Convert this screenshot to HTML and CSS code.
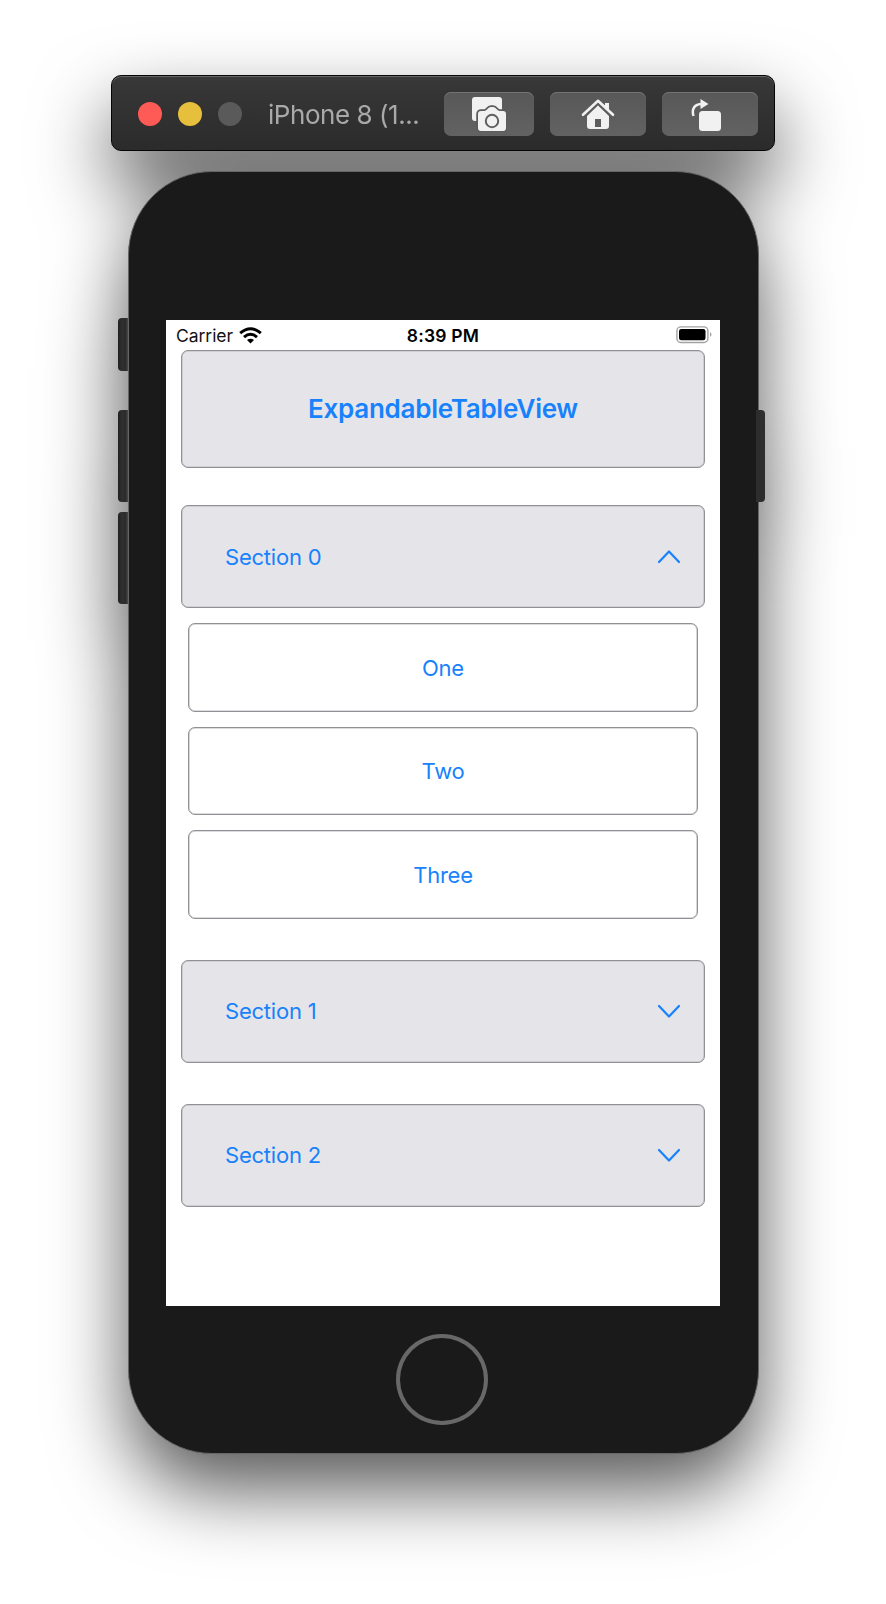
FILE: index.html
```html
<!DOCTYPE html>
<html lang="en">
<head>
<meta charset="utf-8">
<title>iPhone 8 Simulator</title>
<link rel="stylesheet" href="styles.css">
</head>
<body>
<main class="simulator">
  <header class="toolbar">
    <div class="lights"><span class="light close"></span><span class="light minimize"></span><span class="light disabled"></span></div>
    <div class="title">iPhone 8 (1...</div>
    <div class="actions">
      <button class="action shot" aria-label="Screenshot">
        <svg width="36" height="36" viewBox="0 0 36 36"><rect x="1" y="1" width="30" height="24" rx="3" fill="#f1f1f1"/><path fill="#f1f1f1" stroke="#5c5c5c" stroke-width="3.600" paint-order="stroke" d="M10 15h3q2 0 3.500-2Q18 11 20 11h2q2 0 3.500 2 1.500 2 3.500 2h3a3 3 0 0 1 3 3v14a3 3 0 0 1-3 3H10a3 3 0 0 1-3-3V18a3 3 0 0 1 3-3z"/><circle cx="21" cy="25" r="6.200" fill="none" stroke="#606060" stroke-width="2"/></svg>
      </button>
      <button class="action home" aria-label="Home">
        <svg width="36" height="36" viewBox="0 0 36 36"><path fill="#f1f1f1" d="M18 8.500 29 19v11a3 3 0 0 1-3 3H10a3 3 0 0 1-3-3V19z"/><path fill="#5c5c5c" d="M15 23h6v8h-6z"/><path fill="#f1f1f1" d="M25 7h4v9l-4-4z"/><path fill="none" stroke="#5c5c5c" stroke-width="2" d="M4 21.500 18 8l14 13.500"/><path fill="none" stroke="#f1f1f1" stroke-width="2.600" stroke-linecap="round" stroke-linejoin="round" d="M3 18.800 18 4.800l15 14"/></svg>
      </button>
      <button class="action rotate" aria-label="Rotate">
        <svg width="36" height="36" viewBox="0 0 36 36"><rect x="12" y="15" width="22" height="20" rx="3.500" fill="#f1f1f1"/><path fill="none" stroke="#f1f1f1" stroke-width="2.500" d="M6.500 20C4.500 13.500 7 8.500 14 8"/><path fill="#f1f1f1" d="M13.500 3 21.500 8l-8 5z"/></svg>
      </button>
    </div>
  </header>
  <section class="phone">
    <span class="key mute"></span><span class="key up"></span><span class="key down"></span><span class="key power"></span>
    <div class="screen">
      <div class="status">
        <div class="carrier"><span>Carrier</span>
          <svg width="23" height="17" viewBox="0 0 23 17"><g fill="none" stroke="#000" stroke-width="3"><path d="M1.200 6.200Q11.500-2.800 21.800 6.200"/><path d="M5 10.100Q11.500 4.500 18 10.100"/></g><path d="M8 13q3.500-2.600 7 0l-3.500 3.600z"/></svg>
        </div>
        <div class="time">8:39 PM</div>
        <svg class="battery" width="36" height="18" viewBox="0 0 36 18"><rect x=".9" y=".9" width="31" height="15.600" rx="4" fill="none" stroke="#a2a2a2" stroke-width="1.400"/><rect x="3" y="3" width="26.500" height="11.300" rx="2.300"/><path fill="#a2a2a2" d="M34 6q3 2.500 0 5z"/></svg>
      </div>
      <h1 class="box heading">ExpandableTableView</h1>
      <div class="box section first"><span>Section 0</span><svg width="24" height="16" viewBox="0 0 24 16"><path d="M2 13 12 2.500 22 13"/></svg></div>
      <ul class="items">
        <li class="box item">One</li>
        <li class="box item">Two</li>
        <li class="box item">Three</li>
      </ul>
      <div class="box section"><span>Section 1</span><svg width="24" height="16" viewBox="0 0 24 16"><path d="M2 3 12 13.500 22 3"/></svg></div>
      <div class="box section"><span>Section 2</span><svg width="24" height="16" viewBox="0 0 24 16"><path d="M2 3 12 13.500 22 3"/></svg></div>
    </div>
    <div class="home-button"></div>
  </section>
</main>
</body>
</html>
```
FILE: styles.css
```css
* { box-sizing: border-box; }
html, body { margin: 0; background: #fff; }
body { width: 886px; height: 1604px; overflow: hidden; font-family: Inter, Roboto, sans-serif; }
.simulator { width: 886px; height: 1604px; padding: 75px 111px 0; filter: drop-shadow(0 36px 38px rgba(0,0,0,.65)); }
.toolbar {
  display: flex; align-items: center; width: 664px; height: 76px; padding: 2px 16px 0 26px;
  border: 1px solid #050505; border-radius: 10px;
  background: linear-gradient(#383838, #2b2b2b); box-shadow: inset 0 1px 0 #666;
}
.lights { display: flex; gap: 16px; }
.light { width: 24px; height: 24px; border-radius: 50%; }
.close { background: #ff5b56; }
.minimize { background: #e6bf3c; }
.disabled { background: #5a5a5a; }
.title { margin-left: 26px; padding-top: 2px; width: 176px; color: #a9a9a9; font-size: 26px; line-height: 32px; letter-spacing: -.45px; white-space: nowrap; }
.actions { display: flex; gap: 16px; }
.action {
  display: flex; align-items: center; justify-content: center; width: 96px; height: 44px; padding: 0;
  border: 0; border-radius: 7px; background: linear-gradient(#585858, #626262); box-shadow: inset 0 1px 0 #747474;
}
.shot { width: 90px; }
.rotate { padding-right: 10px; }
.phone {
  position: relative; width: 631px; height: 1283px; margin: 20px 0 0 17px; padding: 148px 36px 0;
  border: 1px solid #666; border-radius: 84px; background: #1a1a1a;
}
.key { position: absolute; left: -11px; width: 10px; height: 92px; border-radius: 4px 0 0 4px; background: linear-gradient(90deg, #202020, #303030 40%, #2b2b2b 75%, #4a4a4a); }
.mute { top: 146px; height: 53px; }
.up { top: 238px; }
.down { top: 340px; }
.power { top: 238px; left: auto; right: -7px; width: 9px; border-radius: 0 4px 4px 0; background: #2d2d2d; }
.screen { width: 554px; height: 986px; margin-left: 1px; background: #fff; }
.status { display: grid; grid-template-columns: 1fr auto 1fr; align-items: center; height: 30px; padding: 0 8px 0 10px; font-size: 17.500px; color: #111; }
.carrier { display: flex; align-items: center; gap: 6px; letter-spacing: -.05px; }
.time { margin-left: -2px; font-weight: 600; color: #000; letter-spacing: .2px; }
.battery { justify-self: end; margin-top: -1px; }
.box { margin: 0; border: 1px solid #919195; border-radius: 7px; box-shadow: inset 0 0 0 .6px #bcbcc0; color: #1782fb; background: #e5e4e9; }
.heading { display: flex; align-items: center; justify-content: center; height: 118px; margin: 0 15px; padding-bottom: 1px; font-size: 26px; font-weight: 600; letter-spacing: -.27px; }
.section { display: flex; align-items: center; justify-content: space-between; height: 103px; margin: 41px 15px 0; padding: 0 23px 0 43px; font-size: 22px; letter-spacing: -.22px; }
.first { margin-top: 37px; }
.section svg { fill: none; stroke: #1782fb; stroke-width: 2.200; stroke-linecap: round; stroke-linejoin: round; }
.items { display: grid; gap: 15px; margin: 15px 22px 0; padding: 0; list-style: none; }
.item { display: flex; align-items: center; justify-content: center; height: 88.500px; padding-top: 1px; background: #fff; font-size: 22px; letter-spacing: -.25px; }
.home-button { width: 92px; height: 91px; margin: 28px 0 0 231px; border: 4px solid #686868; border-radius: 50%; }
```
